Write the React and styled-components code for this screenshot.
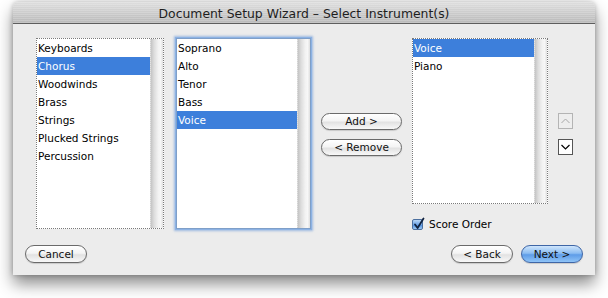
import React from "react";
import styled, { createGlobalStyle } from "styled-components";

const Global = createGlobalStyle`
  html, body {
    margin: 0;
    padding: 0;
    background: #ffffff;
  }
  body {
    font-family: "DejaVu Sans", "Liberation Sans", sans-serif;
    font-size: 10.5px;
    color: #000;
  }
`;

const Page = styled.div`
  width: 608px;
  height: 298px;
  padding: 2px 0 0 13px;
  box-sizing: border-box;
  overflow: hidden;
`;

const Window = styled.div`
  width: 582px;
  height: 273px;
  display: flex;
  flex-direction: column;
  background: #ececec;
  border-radius: 5px 5px 0 0;
  box-shadow: 0 9px 16px rgba(0, 0, 0, 0.45), 0 0 5px rgba(0, 0, 0, 0.25);
  overflow: hidden;
`;

const TitleBar = styled.div`
  height: 20px;
  flex: none;
  display: flex;
  align-items: center;
  justify-content: center;
  background: repeating-linear-gradient(
      to bottom,
      rgba(255, 255, 255, 0.18) 0,
      rgba(255, 255, 255, 0.18) 1px,
      transparent 1px,
      transparent 2px
    ),
    linear-gradient(to bottom, #dedede, #cccccc 50%, #b9b9b9);
  border-bottom: 1px solid #5e5e5e;
  font-size: 12.4px;
  color: #1e1e1e;
  padding-top: 1px;
`;

const Body = styled.div`
  flex: 1;
  display: flex;
  flex-direction: column;
  padding: 14px 12px 12px 12px;
`;

const Main = styled.div`
  display: flex;
  align-items: flex-start;
  padding-left: 11px;
`;

const List = styled.div`
  position: relative;
  width: ${(p) => p.$w}px;
  height: ${(p) => p.$h}px;
  margin-left: ${(p) => p.$ml || 0}px;
  box-sizing: border-box;
  background: #fff;
  border: 1px ${(p) => (p.$focus ? "solid #7f9fc8" : "dotted #7a7a7a")};
  box-shadow: ${(p) =>
    p.$focus ? "0 0 0 1px #8cb2e4, 0 0 2px 2px rgba(95,145,215,0.55)" : "none"};
  display: flex;
  flex: none;
`;

const Items = styled.div`
  flex: 1;
  display: flex;
  flex-direction: column;
`;

const Item = styled.div`
  height: 18px;
  line-height: 18px;
  padding-left: 1px;
  white-space: nowrap;
  background: ${(p) => (p.$sel ? "#3d7fdb" : "transparent")};
  color: ${(p) => (p.$sel ? "#fff" : "#000")};
`;

const Track = styled.div`
  width: 12px;
  flex: none;
  background: linear-gradient(
    to right,
    #c4c4c4,
    #dcdcdc 25%,
    #f2f2f2 60%,
    #f7f7f7 80%,
    #dedede
  );
  border-left: 1px dotted #d0d0d0;
`;

const ButtonCol = styled.div`
  display: flex;
  flex-direction: column;
  gap: ${(p) => p.$gap}px;
  padding-top: 75px;
  margin-left: ${(p) => p.$ml}px;
  flex: none;
`;

const Pill = styled.button`
  width: ${(p) => p.$w}px;
  height: ${(p) => p.$h || 17}px;
  padding: 0;
  box-sizing: border-box;
  border-radius: 10px;
  border: 1px solid ${(p) => (p.$primary ? "#3f66a6" : "#6a6a6a")};
  background: ${(p) =>
    p.$primary
      ? "linear-gradient(to bottom, #cfe5fc 0%, #8cbdf2 45%, #5e9ce8 55%, #8fc4f7 100%)"
      : "linear-gradient(to bottom, #ffffff 0%, #f4f4f4 45%, #e2e2e2 55%, #f8f8f8 100%)"};
  box-shadow: 0 1px 1px rgba(0, 0, 0, 0.15);
  font-family: "DejaVu Sans", sans-serif;
  font-size: 10.5px;
  color: #111;
  line-height: 1;
  display: flex;
  align-items: center;
  justify-content: center;
`;

const RightCol = styled.div`
  display: flex;
  flex-direction: column;
  margin-left: 10px;
  flex: none;
`;

const CheckRow = styled.label`
  display: flex;
  align-items: center;
  gap: 6px;
  margin-top: 14px;
  height: 12px;
  font-size: 10.5px;
`;

const Box = styled.span`
  width: 11px;
  height: 11px;
  box-sizing: border-box;
  border: 1px solid #4b6f9f;
  border-radius: 2px;
  background: linear-gradient(to bottom, #b8d6f6, #6fa5e6 50%, #4f8edf 55%, #9ccaf5);
  position: relative;
  display: block;

  svg {
    position: absolute;
    left: 0;
    top: -3px;
  }
`;

const ArrowBtn = styled.div`
  width: 15px;
  height: 16px;
  box-sizing: border-box;
  border: 1px solid ${(p) => (p.$off ? "#b4b4b4" : "#555")};
  background: ${(p) => (p.$off ? "#eeeeee" : "#ffffff")};
  display: flex;
  align-items: center;
  justify-content: center;
`;

const Footer = styled.div`
  margin-top: auto;
  display: flex;
  align-items: center;
`;

const Spacer = styled.div`
  flex: 1;
`;

const FooterRight = styled.div`
  display: flex;
  gap: 8px;
`;

function ListBox({ items, sel, w, h, ml, focus }) {
  return (
    <List $w={w} $h={h} $ml={ml} $focus={focus}>
      <Items>
        {items.map((t) => (
          <Item key={t} $sel={t === sel}>
            {t}
          </Item>
        ))}
      </Items>
      <Track />
    </List>
  );
}

export default function App() {
  return (
    <>
      <Global />
      <Page>
        <Window>
          <TitleBar>Document Setup Wizard – Select Instrument(s)</TitleBar>
          <Body>
            <Main>
              <ListBox
                w={128}
                h={191}
                sel="Chorus"
                items={[
                  "Keyboards",
                  "Chorus",
                  "Woodwinds",
                  "Brass",
                  "Strings",
                  "Plucked Strings",
                  "Percussion",
                ]}
              />
              <ListBox
                w={135}
                h={191}
                ml={12}
                focus
                sel="Voice"
                items={["Soprano", "Alto", "Tenor", "Bass", "Voice"]}
              />
              <ButtonCol $ml={10} $gap={9}>
                <Pill $w={81}>Add &gt;</Pill>
                <Pill $w={81}>&lt; Remove</Pill>
              </ButtonCol>
              <RightCol>
                <ListBox w={136} h={166} sel="Voice" items={["Voice", "Piano"]} />
                <CheckRow>
                  <Box>
                    <svg width="12" height="13" viewBox="0 0 12 13">
                      <path
                        d="M2 7.5 L4.6 11 L10.5 1.5"
                        fill="none"
                        stroke="#10223f"
                        strokeWidth="1.8"
                        strokeLinecap="round"
                        strokeLinejoin="round"
                      />
                    </svg>
                  </Box>
                  Score Order
                </CheckRow>
              </RightCol>
              <ButtonCol $ml={10} $gap={10}>
                <ArrowBtn $off>
                  <svg width="9" height="6" viewBox="0 0 9 6">
                    <path d="M0.5 5 L4.5 1 L8.5 5" fill="none" stroke="#a8a8a8" strokeWidth="1" />
                  </svg>
                </ArrowBtn>
                <ArrowBtn>
                  <svg width="9" height="6" viewBox="0 0 9 6">
                    <path d="M0.5 1 L4.5 5 L8.5 1" fill="none" stroke="#000" strokeWidth="1.2" />
                  </svg>
                </ArrowBtn>
              </ButtonCol>
            </Main>
            <Footer>
              <Pill $w={62} $h={18}>Cancel</Pill>
              <Spacer />
              <FooterRight>
                <Pill $w={62} $h={18}>&lt; Back</Pill>
                <Pill $w={62} $h={18} $primary>
                  Next &gt;
                </Pill>
              </FooterRight>
            </Footer>
          </Body>
        </Window>
      </Page>
    </>
  );
}
